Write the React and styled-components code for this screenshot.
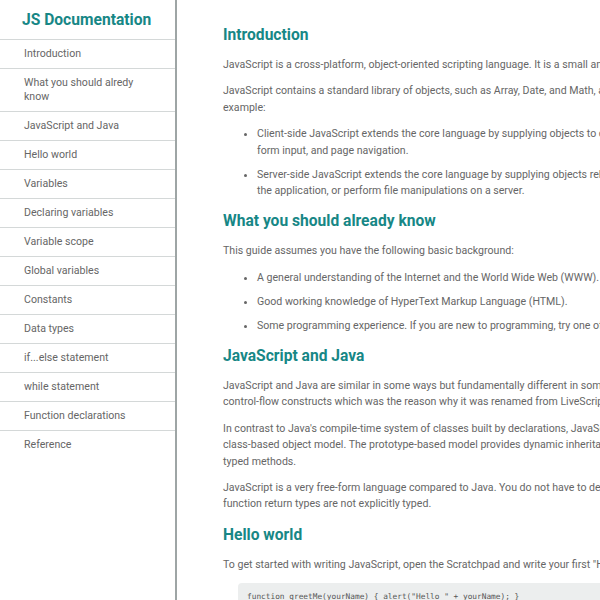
import styled, { createGlobalStyle } from "styled-components";

const GlobalStyle = createGlobalStyle`
    html, body {
        margin: 0;
        padding: 0;
        width: 600px;
        height: 600px;
        overflow: hidden;
        background: #fff;
    }
    * {
        box-sizing: border-box;
    }
`;

const navItems = [
    "Introduction",
    "What you should alredy know",
    "JavaScript and Java",
    "Hello world",
    "Variables",
    "Declaring variables",
    "Variable scope",
    "Global variables",
    "Constants",
    "Data types",
    "if...else statement",
    "while statement",
    "Function declarations",
    "Reference",
];

export default function App() {
    return (
        <>
            <GlobalStyle />
            <Page>
                <NavBar>
                    <NavHeader>JS Documentation</NavHeader>
                    <NavList>
                        {navItems.map((item) => (
                            <NavItem key={item}>
                                <NavLink href="#">{item}</NavLink>
                            </NavItem>
                        ))}
                    </NavList>
                </NavBar>
                <Main>
                    <Section>
                        <Heading>Introduction</Heading>
                        <Text>
                            JavaScript is a cross-platform, object-oriented scripting language. It is a small and lightweight language. Inside a host environment (for example, a web browser), JavaScript can be connected to the objects of its environment to provide programmatic control over them.
                        </Text>
                        <Text>
                            JavaScript contains a standard library of objects, such as Array, Date, and Math, and a core set of language elements such as operators, control structures, and statements. Core JavaScript can be extended for a variety of purposes by supplementing it with additional objects; for example:
                        </Text>
                        <List>
                            <Item>
                                Client-side JavaScript extends the core language by supplying objects to control a browser and its Document Object Model (DOM). For example, client-side extensions allow an application to place elements on an HTML form and respond to user events such as mouse clicks, form input, and page navigation.
                            </Item>
                            <Item>
                                Server-side JavaScript extends the core language by supplying objects relevant to running JavaScript on a server. For example, server-side extensions allow an application to communicate with a database, provide continuity of information from one invocation to another of the application, or perform file manipulations on a server.
                            </Item>
                        </List>
                    </Section>
                    <Section>
                        <Heading>What you should already know</Heading>
                        <Text>This guide assumes you have the following basic background:</Text>
                        <List>
                            <Item>A general understanding of the Internet and the World Wide Web (WWW).</Item>
                            <Item>Good working knowledge of HyperText Markup Language (HTML).</Item>
                            <Item>Some programming experience. If you are new to programming, try one of the tutorials linked on the main page about JavaScript.</Item>
                        </List>
                    </Section>
                    <Section>
                        <Heading>JavaScript and Java</Heading>
                        <Text>
                            JavaScript and Java are similar in some ways but fundamentally different in some others. The JavaScript language resembles Java but does not have Java's static typing and strong type checking. JavaScript follows most Java expression syntax, naming conventions and basic control-flow constructs which was the reason why it was renamed from LiveScript to JavaScript.
                        </Text>
                        <Text>
                            In contrast to Java's compile-time system of classes built by declarations, JavaScript supports a runtime system based on a small number of data types representing numeric, Boolean, and string values. JavaScript has a prototype-based object model instead of the more common class-based object model. The prototype-based model provides dynamic inheritance; that is, what is inherited can vary for individual objects. JavaScript also supports functions without any special declarative requirements. Functions can be properties of objects, executing as loosely typed methods.
                        </Text>
                        <Text>
                            JavaScript is a very free-form language compared to Java. You do not have to declare all variables, classes, and methods. You do not have to be concerned with whether methods are public, private, or protected, and you do not have to implement interfaces. Variables, parameters, and function return types are not explicitly typed.
                        </Text>
                    </Section>
                    <Section>
                        <Heading>Hello world</Heading>
                        <Text>
                            To get started with writing JavaScript, open the Scratchpad and write your first "Hello world" JavaScript code:
                        </Text>
                        <Code>function greetMe(yourName) {"{"} alert("Hello " + yourName); {"}"}</Code>
                    </Section>
                </Main>
            </Page>
        </>
    );
}

const Page = styled.div`
    display: flex;
    width: 600px;
    height: 600px;
    overflow: hidden;
    font-family: Roboto, "Liberation Sans", sans-serif;
`

const NavBar = styled.nav`
    flex: 0 0 177px;
    height: 600px;
    border-right: 2px solid #9ea5a5;
`

const NavHeader = styled.header`
    height: 39px;
    display: flex;
    align-items: center;
    padding-left: 22px;
    font-size: 15.6px;
    font-weight: 700;
    color: #178786;
`

const NavList = styled.ul`
    list-style: none;
    margin: 0;
    padding: 0;
`

const NavItem = styled.li`
    border-top: 1px solid #d4d8d8;
`

const NavLink = styled.a`
    display: block;
    padding: 7px 24px;
    font-size: 10.6px;
    line-height: 14px;
    color: #666;
    text-decoration: none;
`

const Main = styled.main`
    flex: 0 0 auto;
    width: 1371px;
    padding: 23px 0 0 46px;
    color: #666;
    font-size: 10.6px;
    line-height: 16.4px;
`

const Section = styled.section`
    margin-bottom: 5px;
`

const Heading = styled.h2`
    margin: 0 0 10px;
    font-size: 15.6px;
    line-height: 24px;
    font-weight: 700;
    color: #178786;
`

const Text = styled.p`
    margin: 0 0 10px;
`

const List = styled.ul`
    margin: 0 0 10px;
    padding: 0 5px 0 34px;
`

const Item = styled.li`
    margin-bottom: 7.5px;
`

const Code = styled.pre`
    margin: 1px 0 0 15px;
    padding: 8px 9px;
    background: #eceeee;
    border-radius: 4px;
    font-family: "DejaVu Sans Mono", "Liberation Mono", monospace;
    font-size: 7.8px;
    line-height: 12px;
    color: #555;
`
